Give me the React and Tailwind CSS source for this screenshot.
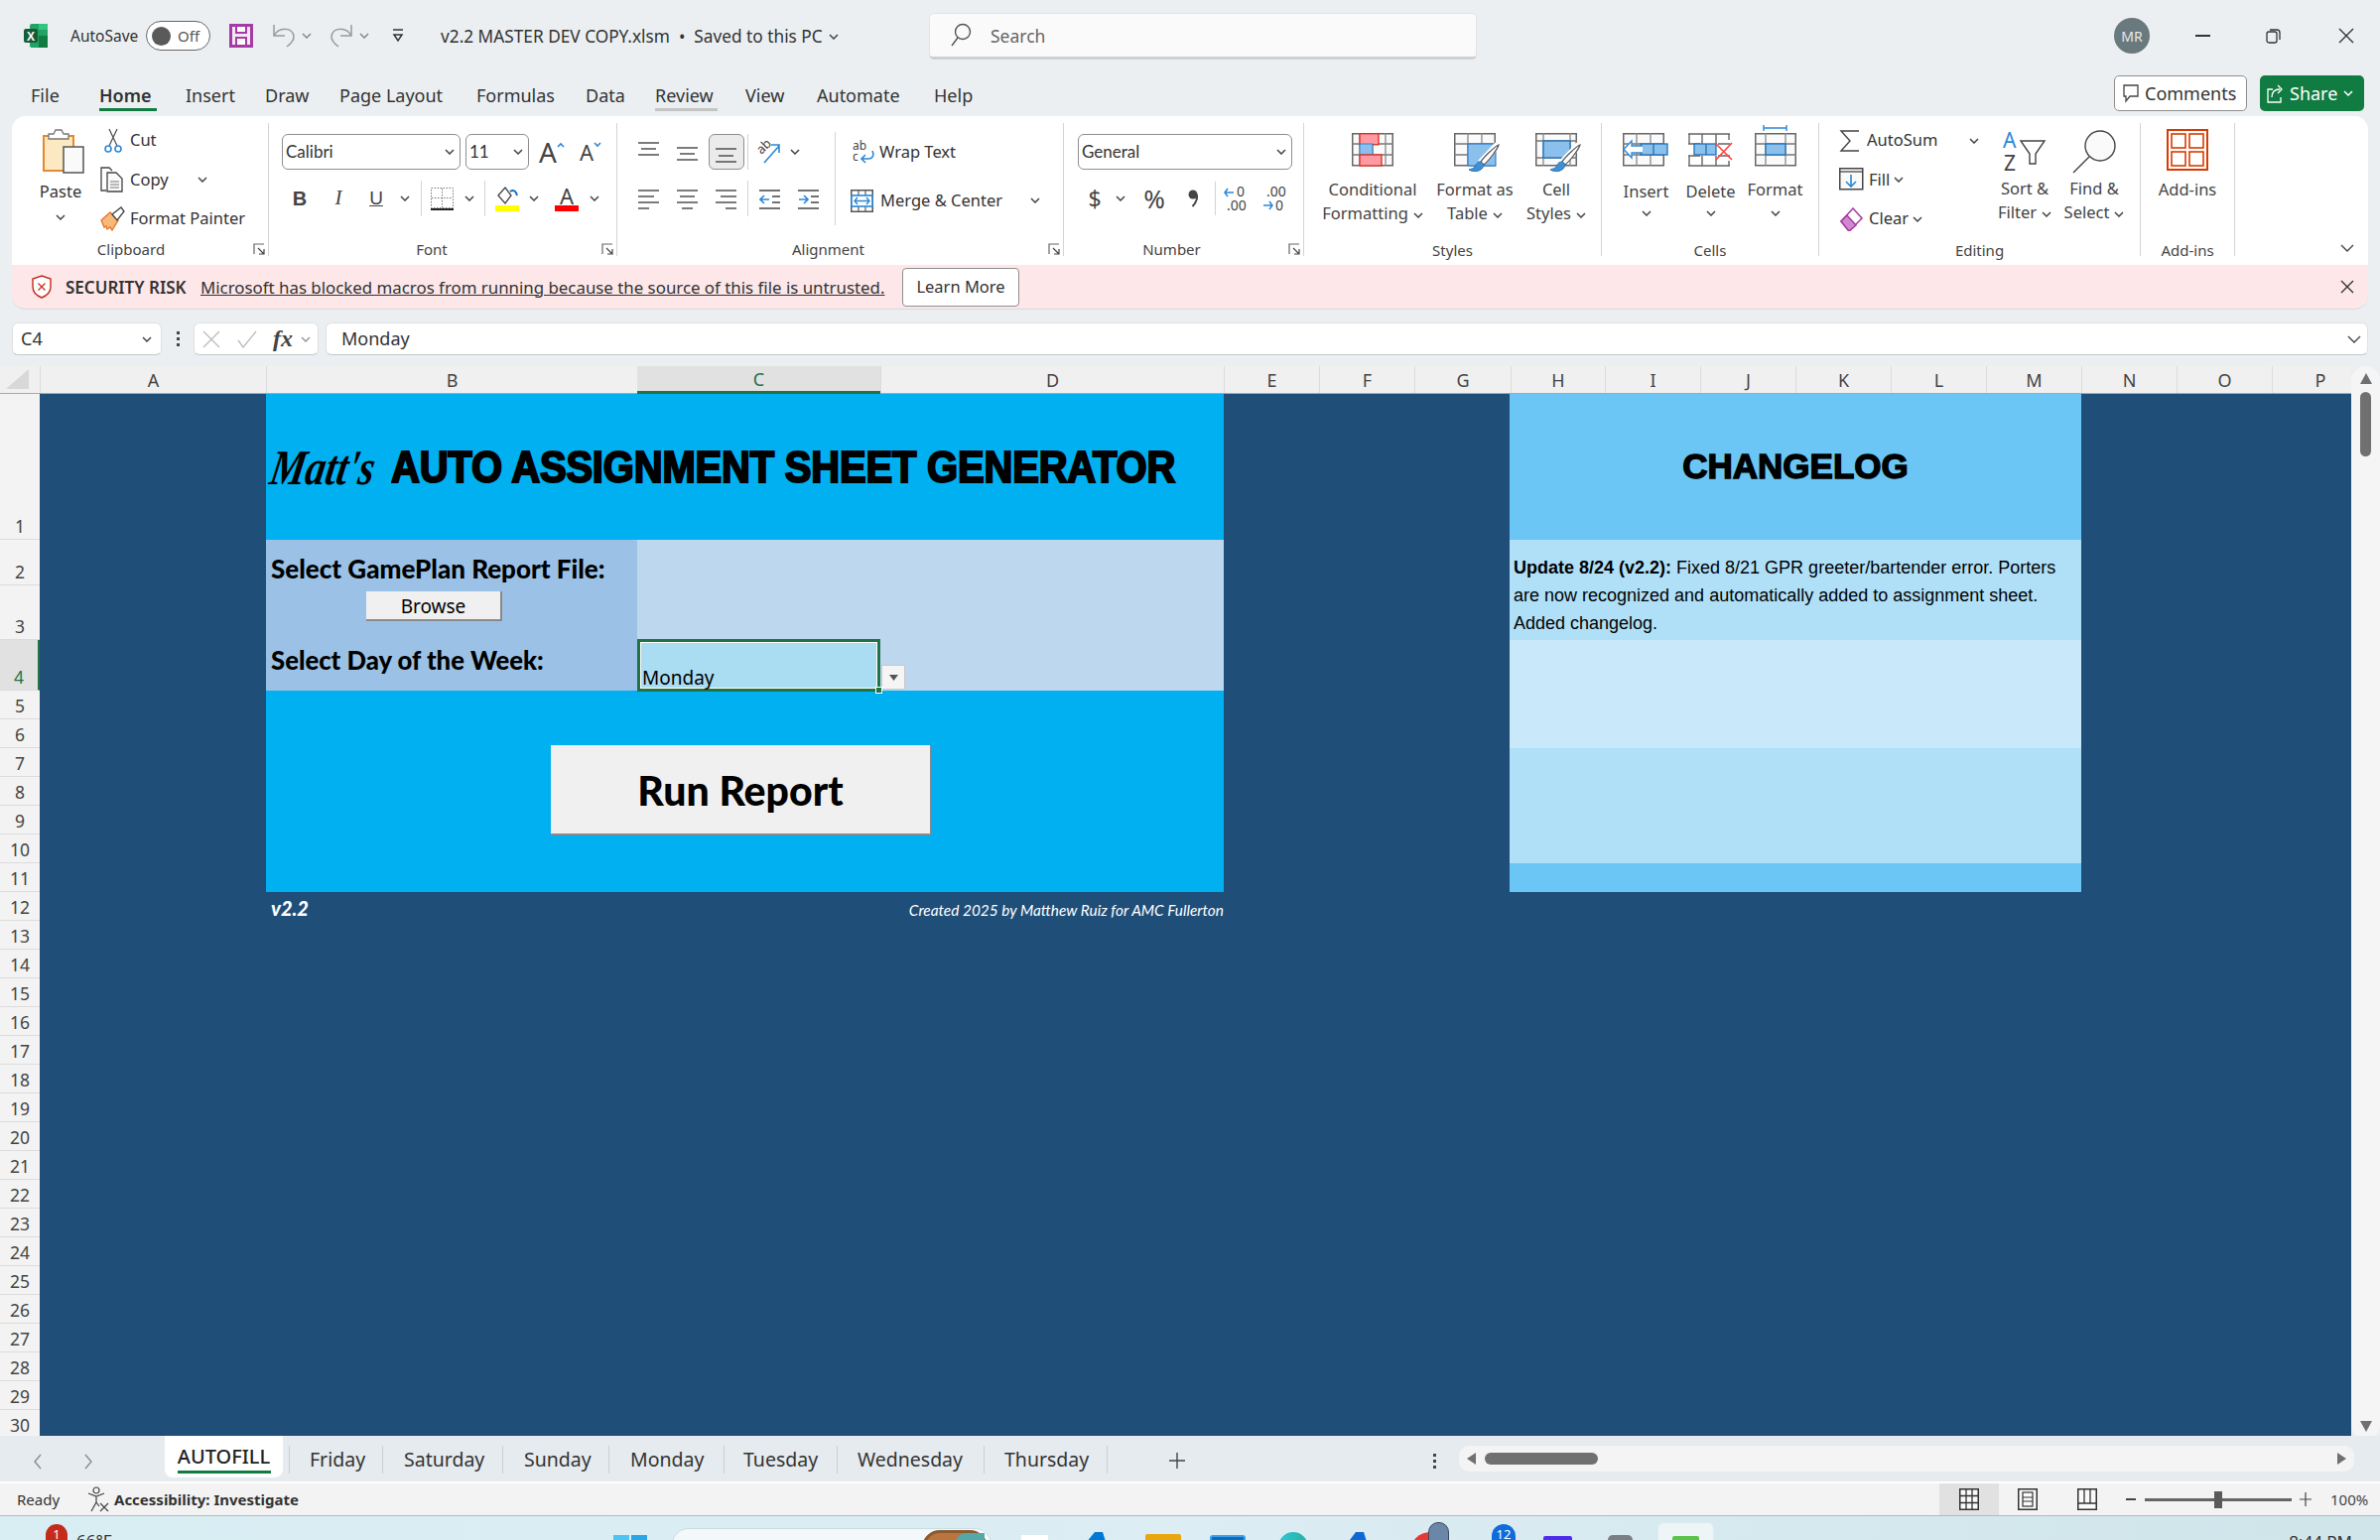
import React from "react";

const Chev = ({ className = "", c = "#444" }) => (
  <svg width="10" height="6" viewBox="0 0 10 6" className={"shrink-0 " + className}>
    <path d="M1 1l4 4 4-4" fill="none" stroke={c} strokeWidth="1.5" />
  </svg>
);

const Launcher = ({ className = "" }) => (
  <svg width="12" height="12" viewBox="0 0 12 12" className={"absolute top-[-1px] " + className}>
    <path d="M1 11V1h10" fill="none" stroke="#666" strokeWidth="1.2" />
    <path d="M5 5l5.5 5.5M6 11h5V6" fill="none" stroke="#444" strokeWidth="1.2" />
  </svg>
);

const Label = ({ className = "", children }) => (
  <div className={"relative mt-auto h-[12px] leading-[10px] text-center text-[15px] text-[#444] " + className}>{children}</div>
);

const Sep = ({ className = "" }) => <div className={"w-px h-[36px] bg-[#d4d4d4] shrink-0 " + className} />;

const Lines = ({ l, className = "", w = 22, h = 22 }) => (
  <svg width={w} height={h} viewBox={`0 0 ${w} ${h}`} className={"shrink-0 " + className}>
    {l.map((p, i) => (
      <line key={i} x1={p[0]} x2={p[1]} y1={p[2]} y2={p[2]} stroke="#444" strokeWidth="1.4" />
    ))}
  </svg>
);

const GridBase = ({ rows = [12, 22], cols = [8, 21, 34] }) => (
  <g>
    <rect x="0.75" y="0.75" width="40.5" height="32" fill="#fafafa" stroke="#666" strokeWidth="1.5" />
    {rows.map((y) => (
      <line key={y} x1="0" x2="42" y1={y} y2={y} stroke="#777" strokeWidth="1.3" />
    ))}
    {cols.map((x) => (
      <line key={x} y1="0" y2="33" x1={x} x2={x} stroke="#888" strokeWidth="1.3" />
    ))}
  </g>
);

const Brush = ({ dx = 0, dy = 0 }) => (
  <g transform={`translate(${dx} ${dy})`}>
    <path d="M44 12L27 30" stroke="#fff" strokeWidth="7" fill="none" />
    <path d="M45 12c-3 1-15 12-18 17l3 3c5-4 14-16 15-20z" fill="#fff" stroke="#555" strokeWidth="1.2" />
    <path d="M27 29c-4 0-5 3-6 5-1 2-4 2-6 3 5 3 14 2 15-5z" fill="#3f8fd2" stroke="#2a76b8" strokeWidth="1" />
  </g>
);

const TableChevText = ({ children }) => (
  <span className="inline-flex items-center gap-[5px]">
    {children}
    <Chev className="mt-[3px]" />
  </span>
);

const BigCol = ({ width, icon, l1, l2, chevOnly, iconH = "h-[45px]" }) => (
  <div className={"flex flex-col items-center shrink-0 " + width}>
    <div className={"flex items-start justify-center " + iconH}>{icon}</div>
    <div className="text-[16.5px] leading-[24px] text-[#444] whitespace-nowrap h-[24px]">{l1}</div>
    {chevOnly ? (
      <div className="h-[24px] flex items-center"><Chev /></div>
    ) : (
      <div className="text-[16.5px] leading-[24px] text-[#444] whitespace-nowrap h-[24px]">
        {l2 && <TableChevText>{l2}</TableChevText>}
      </div>
    )}
  </div>
);

const Group = ({ width, children, noBorder }) => (
  <div className={"flex flex-col shrink-0 h-[134px] mt-[7px] " + width + (noBorder ? "" : " border-r border-[#d4d4d4]")}>
    {children}
  </div>
);

const Select = ({ width, text, font }) => (
  <div className={"h-[36px] rounded-[6px] border border-[#8f8f8f] flex items-center justify-between pl-[3px] pr-[5px] bg-white shrink-0 " + width}>
    <span className={"font-['Lato',sans-serif] text-[#333] " + (font || "text-[17px]")}>{text}</span>
    <Chev />
  </div>
);

const Tab = ({ slot, w, active, review, children }) => (
  <div className={"shrink-0 " + slot}>
    <div
      className={
        "h-[36px] pt-[6px] leading-[28px] text-[18px] text-[#333] whitespace-nowrap border-b-[3px] " + w +
        (active ? " border-[#107c41] font-semibold" : review ? " border-[#c4c4c4]" : " border-transparent")
      }
    >
      {children}
    </div>
  </div>
);

const columns = [
  ["A", "w-[228px]"], ["B", "w-[374px]"], ["C", "w-[245px]"], ["D", "w-[346px]"],
  ["E", "w-[96px]"], ["F", "w-[96px]"], ["G", "w-[97px]"], ["H", "w-[95px]"], ["I", "w-[96px]"],
  ["J", "w-[96px]"], ["K", "w-[96px]"], ["L", "w-[96px]"], ["M", "w-[96px]"], ["N", "w-[96px]"],
  ["O", "w-[96px]"], ["P", "w-[80px] pl-[17px]"],
];

const rows = [
  ["1", "h-[147px]"], ["2", "h-[46px]"], ["3", "h-[55px]"], ["4", "h-[51px]"],
  ...Array.from({ length: 26 }, (_, i) => [String(i + 5), "h-[29px]"]),
];

const sheets = [
  ["Friday", "w-[94px]", "pl-[20px]"], ["Saturday", "w-[121px]", "pl-[21px]"], ["Sunday", "w-[107px]", "pl-[21px]"],
  ["Monday", "w-[116px]", "pl-[21px]"], ["Tuesday", "w-[114px]", "pl-[19px]"], ["Wednesday", "w-[148px]", "pl-[20px]"],
  ["Thursday", "w-[124px]", "pl-[20px]"],
];

export default function App() {
  return (
    <div className="w-[2398px] h-[1552px] overflow-hidden bg-[#ebeff2] flex flex-col font-['Noto_Sans',sans-serif] text-[#333]">
      {/* title bar */}
      <div className="h-[72px] shrink-0 flex items-center pl-[24px]">
        <svg width="24" height="24" viewBox="0 0 24 24" className="shrink-0">
          <rect x="6" y="0" width="18" height="24" rx="2" fill="#21a366" />
          <rect x="15" y="0" width="9" height="6" fill="#33c481" />
          <rect x="15" y="12" width="9" height="12" fill="#107c41" />
          <rect x="0" y="5" width="14" height="14" rx="2" fill="#185c37" />
          <text x="7" y="16.5" textAnchor="middle" fontSize="12" fontWeight="700" fill="#fff" fontFamily="Liberation Sans">X</text>
        </svg>
        <span className="ml-[23px] w-[66px] pt-[1px] text-[15.5px] text-[#333] whitespace-nowrap">AutoSave</span>
        <div className="ml-[10px] w-[65px] h-[30px] rounded-full border border-[#666] bg-white flex items-center pl-[5px] gap-[7px] shrink-0">
          <div className="w-[19px] h-[19px] rounded-full bg-[#5a5a5a]" />
          <span className="text-[15px] text-[#555]">Off</span>
        </div>
        <svg width="24" height="24" viewBox="0 0 24 24" className="ml-[19px] shrink-0">
          <rect x="1.5" y="1.5" width="21" height="21" fill="#f5e6f5" stroke="#a53ba5" strokeWidth="3" />
          <rect x="7" y="2" width="10" height="7" fill="#fff" stroke="#a53ba5" strokeWidth="2" />
          <rect x="7" y="14" width="10" height="8" fill="#fff" stroke="#a53ba5" strokeWidth="2" />
        </svg>
        <svg width="24" height="24" viewBox="0 0 24 24" className="ml-[19px] shrink-0">
          <path d="M2 1v11h11M2 12C7 3 21 3 22 13c0 4-3 7-7 10" fill="none" stroke="#999" strokeWidth="1.5" />
        </svg>
        <Chev className="ml-[6px]" c="#888" />
        <svg width="24" height="24" viewBox="0 0 24 24" className="ml-[18px] shrink-0">
          <path d="M22 1v11H11M22 12C17 3 3 3 2 13c0 4 3 7 7 10" fill="none" stroke="#999" strokeWidth="1.5" />
        </svg>
        <Chev className="ml-[6px]" c="#888" />
        <svg width="12" height="14" viewBox="0 0 12 14" className="ml-[23px] shrink-0">
          <path d="M1 1h10" stroke="#333" strokeWidth="1.5" />
          <path d="M2 6h8l-4 6z" fill="none" stroke="#333" strokeWidth="1.5" />
        </svg>
        <div className="ml-[37px] w-[492px] pt-[1px] flex items-center shrink-0 whitespace-nowrap text-[17.25px] text-[#333]">
          <span>v2.2 MASTER DEV COPY.xlsm&nbsp; •&nbsp; Saved to this PC</span>
          <Chev className="ml-[6px]" />
        </div>
        <div className="w-[552px] h-[47px] rounded-[5px] bg-[#fafafa] border border-[#e3e3e3] border-b-[3px] border-b-[#cfcfcf] flex items-center pl-[20px] shrink-0">
          <svg width="22" height="24" viewBox="0 0 22 24">
            <circle cx="13" cy="9" r="7.5" fill="none" stroke="#555" strokeWidth="1.4" />
            <path d="M8 15L2 23" stroke="#555" strokeWidth="1.4" />
          </svg>
          <span className="ml-[19px] pt-[2px] text-[17.5px] text-[#666]">Search</span>
        </div>
        <div className="ml-[642px] w-[36px] h-[36px] rounded-full bg-[#69797e] flex items-center justify-center text-[14px] text-[#e8e8e8] shrink-0">MR</div>
        <div className="ml-[46px] w-[15px] h-[2px] bg-[#333] shrink-0" />
        <svg width="16" height="16" viewBox="0 0 16 16" className="ml-[56px] shrink-0">
          <rect x="1" y="4" width="10" height="11" rx="2" fill="none" stroke="#333" strokeWidth="1.3" />
          <path d="M4 2h7a3 3 0 0 1 3 3v7" fill="none" stroke="#333" strokeWidth="1.3" />
        </svg>
        <svg width="16" height="16" viewBox="0 0 16 16" className="ml-[57px] shrink-0">
          <path d="M1 1l14 14M15 1L1 15" stroke="#333" strokeWidth="1.4" />
        </svg>
      </div>

      {/* ribbon tabs */}
      <div className="h-[45px] shrink-0 flex items-start pt-[4px] pl-[31px] pr-[16px]">
        <Tab slot="w-[69px]" w="w-[40px]">File</Tab>
        <Tab slot="w-[87px]" w="w-[58px]" active>Home</Tab>
        <Tab slot="w-[80px]" w="w-[60px]">Insert</Tab>
        <Tab slot="w-[75px]" w="w-[50px]">Draw</Tab>
        <Tab slot="w-[138px]" w="w-[110px]">Page Layout</Tab>
        <Tab slot="w-[110px]" w="w-[90px]">Formulas</Tab>
        <Tab slot="w-[70px]" w="w-[50px]">Data</Tab>
        <Tab slot="w-[91px]" w="w-[63px]" review>Review</Tab>
        <Tab slot="w-[72px]" w="w-[50px]">View</Tab>
        <Tab slot="w-[118px]" w="w-[95px]">Automate</Tab>
        <Tab slot="w-[60px]" w="w-[50px]">Help</Tab>
        <div className="ml-auto flex gap-[13px]">
          <div className="w-[134px] h-[36px] rounded-[5px] border border-[#8f8f8f] bg-white flex items-center pl-[8px] gap-[6px]">
            <svg width="16" height="20" viewBox="0 0 16 20">
              <path d="M1 2h14v11H7l-4 5v-5H1z" fill="none" stroke="#444" strokeWidth="1.3" />
            </svg>
            <span className="text-[18px] whitespace-nowrap">Comments</span>
          </div>
          <div className="w-[105px] h-[36px] rounded-[5px] bg-[#107c41] text-white flex items-center pl-[7px] gap-[6px]">
            <svg width="17" height="20" viewBox="0 0 17 20">
              <path d="M6 6H1v13h13v-5" fill="none" stroke="#fff" strokeWidth="1.3" />
              <path d="M5 14c0-5 3-8 8-8M11 2l4 4-4 4" fill="none" stroke="#fff" strokeWidth="1.3" />
            </svg>
            <span className="text-[18px]">Share</span>
            <Chev c="#fff" />
          </div>
        </div>
      </div>

      {/* ribbon */}
      <div className="mx-[12px] h-[150px] shrink-0 bg-white rounded-t-[14px] flex items-start">
        {/* Clipboard */}
        <Group width="w-[259px]">
          <div className="flex pl-[24px]">
            <div className="w-[50px] flex flex-col items-center shrink-0">
              <svg width="42" height="46" viewBox="0 0 42 46" className="ml-[6px] mt-[6px] shrink-0">
                <rect x="1" y="7" width="30" height="35" fill="#fde9c1" stroke="#e8872d" strokeWidth="2" />
                <path d="M6 5h5l2-4h6l2 4h5v5H6z" fill="#fff" stroke="#777" strokeWidth="1.3" />
                <rect x="21" y="18" width="20" height="26" fill="#fafafa" stroke="#555" strokeWidth="1.5" />
              </svg>
              <span className="text-[16.5px] leading-[22px] mt-[6px]">Paste</span>
              <Chev className="mt-[12px]" />
            </div>
            <div className="ml-[15px] pt-[5px] flex flex-col gap-[14.5px]">
              <div className="h-[25px] flex items-center">
                <svg width="30" height="26" viewBox="0 0 30 26" className="shrink-0">
                  <path d="M9 1l8 17M17 1L9 18" stroke="#555" strokeWidth="1.3" fill="none" />
                  <circle cx="8" cy="21" r="3" fill="none" stroke="#2b88d8" strokeWidth="1.6" />
                  <circle cx="18" cy="21" r="3" fill="none" stroke="#2b88d8" strokeWidth="1.6" />
                </svg>
                <span className="text-[16.5px]">Cut</span>
              </div>
              <div className="h-[25px] flex items-center">
                <svg width="30" height="26" viewBox="0 0 30 26" className="shrink-0">
                  <path d="M6 24H1V1h8l3 3" fill="none" stroke="#444" strokeWidth="1.3" />
                  <path d="M7 6h9l6 6v13H7z" fill="#fafafa" stroke="#444" strokeWidth="1.3" />
                  <path d="M10 15h9M10 18h9M10 21h9" stroke="#777" strokeWidth="1" />
                </svg>
                <span className="text-[16.5px]">Copy</span>
                <Chev className="ml-[29px]" />
              </div>
              <div className="h-[25px] flex items-center">
                <svg width="30" height="26" viewBox="0 0 30 26" className="shrink-0">
                  <path d="M1 14l9-8 8 8-6 10-2-3-3 2-1-3-2 1z" fill="#f7b978" stroke="#e8772d" strokeWidth="1.4" />
                  <path d="M12 8l9-7 3 4-7 9z" fill="#fff" stroke="#444" strokeWidth="1.3" />
                </svg>
                <span className="text-[16.5px] whitespace-nowrap">Format Painter</span>
              </div>
            </div>
          </div>
          <Label className="pr-[18px]">Clipboard<Launcher className="right-[3px]" /></Label>
        </Group>

        {/* Font */}
        <Group width="w-[351px]">
          <div className="flex items-center pt-[11px] pl-[13px]">
            <Select width="w-[180px]" text="Calibri" />
            <Select width="w-[64px] ml-[5px]" text="11" />
            <span className="ml-[10px] text-[28px] leading-[36px] text-[#444]">A</span>
            <svg width="8" height="6" viewBox="0 0 8 6" className="mb-[14px]"><path d="M1 5l3-3 3 3" fill="none" stroke="#2b88d8" strokeWidth="1.6" /></svg>
            <span className="ml-[15px] text-[22px] leading-[36px] text-[#444]">A</span>
            <svg width="8" height="6" viewBox="0 0 8 6" className="mb-[14px]"><path d="M1 1l3 3 3-3" fill="none" stroke="#2b88d8" strokeWidth="1.6" /></svg>
          </div>
          <div className="flex items-center mt-[11px] h-[36px] pl-[17px]">
            <span className="w-[28px] text-center font-['Liberation_Sans'] font-bold text-[20px] text-[#444]">B</span>
            <span className="ml-[11px] w-[28px] text-center font-['Liberation_Serif'] italic text-[21px] text-[#444]">I</span>
            <span className="ml-[10px] w-[28px] text-center font-['Liberation_Sans'] underline text-[19px] text-[#444]">U</span>
            <Chev className="ml-[10px]" />
            <Sep className="ml-[11px]" />
            <svg width="23" height="23" viewBox="0 0 23 23" className="ml-[9px] shrink-0">
              <rect x="0.5" y="0.5" width="22" height="20" fill="none" stroke="#777" strokeWidth="1" strokeDasharray="1.5 1.5" />
              <path d="M11.5 1v19M1 10.5h21" stroke="#777" strokeWidth="1" strokeDasharray="1.5 1.5" />
              <path d="M0 22h23" stroke="#222" strokeWidth="2" />
            </svg>
            <Chev className="ml-[11px]" />
            <Sep className="ml-[10px]" />
            <div className="ml-[10px] w-[24px] flex flex-col items-center shrink-0">
              <svg width="24" height="20" viewBox="0 0 24 20">
                <path d="M3 10l7-8 6 8-6 8z" fill="#fff" stroke="#444" strokeWidth="1.3" />
                <path d="M15 6c3-2 6-1 7 4" fill="none" stroke="#1a6fb8" strokeWidth="2" />
              </svg>
              <div className="w-[24px] h-[6px] bg-[#ffff00]" />
            </div>
            <Chev className="ml-[10px]" />
            <div className="ml-[16px] w-[24px] flex flex-col items-center shrink-0">
              <span className="text-[22px] leading-[20px] h-[20px] text-[#444]">A</span>
              <div className="w-[24px] h-[6px] bg-[#ff0000]" />
            </div>
            <Chev className="ml-[11px]" />
          </div>
          <Label className="pr-[22px]">Font<Launcher className="right-[3px]" /></Label>
        </Group>

        {/* Alignment */}
        <Group width="w-[450px]">
          <div className="flex">
            <div className="w-[219px] shrink-0 pt-[11px] flex flex-col gap-[11px]">
              <div className="flex items-center h-[36px] pl-[21px]">
                <Lines l={[[0, 21, 2], [3, 18, 8], [0, 21, 14]]} />
                <Lines className="ml-[17px]" l={[[0, 21, 7], [3, 18, 13], [0, 21, 19]]} />
                <div className="ml-[10px] w-[36px] h-[36px] rounded-[6px] bg-[#ebebeb] border border-[#8f8f8f] flex items-end justify-center pb-[3px] shrink-0">
                  <Lines l={[[0, 21, 5], [3, 18, 12], [0, 21, 18]]} />
                </div>
                <Sep className="ml-[3px]" />
                <svg width="24" height="26" viewBox="0 0 24 26" className="ml-[9px] shrink-0">
                  <text x="0" y="12" fontSize="13" fill="#444" transform="rotate(-45 7 9)" fontFamily="Noto Sans">ab</text>
                  <path d="M7 24L22 7M14 6h8v8" fill="none" stroke="#2b88d8" strokeWidth="1.6" />
                </svg>
                <Chev className="ml-[9px]" />
              </div>
              <div className="flex items-center h-[36px] pl-[21px]">
                <Lines l={[[0, 21, 3], [0, 16, 9], [0, 21, 15], [0, 11, 21]]} />
                <Lines className="ml-[17px]" l={[[0, 21, 3], [3, 18, 9], [0, 21, 15], [5, 16, 21]]} />
                <Lines className="ml-[17px]" l={[[0, 21, 3], [5, 21, 9], [0, 21, 15], [10, 21, 21]]} />
                <Sep className="ml-[10px]" />
                <svg width="22" height="22" viewBox="0 0 22 22" className="ml-[11px] shrink-0">
                  <path d="M0 3h21M13 9h8M13 15h8M0 21h21" stroke="#444" strokeWidth="1.4" />
                  <path d="M10 12H1M5 8l-4 4 4 4" fill="none" stroke="#2b88d8" strokeWidth="1.6" />
                </svg>
                <svg width="22" height="22" viewBox="0 0 22 22" className="ml-[17px] shrink-0">
                  <path d="M0 3h21M13 9h8M13 15h8M0 21h21" stroke="#444" strokeWidth="1.4" />
                  <path d="M1 12h9M6 8l4 4-4 4" fill="none" stroke="#2b88d8" strokeWidth="1.6" />
                </svg>
              </div>
            </div>
            <div className="h-[94px] mt-[9px] border-l border-[#d4d4d4] flex-1 flex flex-col">
              <div className="flex items-center h-[24px] pl-[17px] mt-[8px]">
                <svg width="22" height="24" viewBox="0 0 22 24" className="shrink-0">
                  <text x="0" y="10" fontSize="12" fill="#444" fontFamily="Noto Sans">ab</text>
                  <text x="0" y="21" fontSize="12" fill="#444" fontFamily="Noto Sans">c</text>
                  <path d="M20 11c2 5 0 8-4 8H10M13 15l-4 4 4 4" fill="none" stroke="#2b88d8" strokeWidth="1.6" />
                </svg>
                <span className="ml-[5px] text-[16.5px] whitespace-nowrap">Wrap Text</span>
              </div>
              <div className="flex items-center h-[24px] pl-[15px] mt-[25px]">
                <svg width="23" height="23" viewBox="0 0 23 23" className="shrink-0">
                  <rect x="0.75" y="0.75" width="21.5" height="21.5" fill="none" stroke="#555" strokeWidth="1.5" />
                  <path d="M8 1v5M15 1v5M8 17v5M15 17v5" stroke="#666" strokeWidth="1.3" />
                  <rect x="1" y="6" width="21" height="11" fill="#fff" stroke="#2b88d8" strokeWidth="1.6" />
                  <path d="M4 11.5h15M7 8l-3 3.5 3 3.5M16 8l3 3.5-3 3.5" fill="none" stroke="#2b88d8" strokeWidth="1.4" />
                </svg>
                <span className="ml-[7px] w-[151px] text-[16.5px] whitespace-nowrap">Merge &amp; Center</span>
                <Chev />
              </div>
            </div>
          </div>
          <Label className="pr-[24px]">Alignment<Launcher className="right-[3px]" /></Label>
        </Group>

        {/* Number */}
        <Group width="w-[242px]">
          <div className="pt-[11px] pl-[14px]"><Select width="w-[216px]" text="General" /></div>
          <div className="flex items-center mt-[11px] h-[36px] pl-[24px]">
            <span className="w-[14px] text-center text-[23px] text-[#444]">$</span>
            <Chev className="ml-[14px]" />
            <span className="ml-[15px] w-[28px] text-center text-[26px] text-[#444]">%</span>
            <svg width="10" height="18" viewBox="0 0 10 18" className="ml-[20px] shrink-0">
              <circle cx="5" cy="5" r="4.5" fill="#444" />
              <path d="M9.5 5c0 5-2 9-5 12" fill="none" stroke="#444" strokeWidth="2" />
            </svg>
            <div className="ml-[17px] w-px h-[34px] bg-[#d4d4d4] shrink-0" />
            <svg width="24" height="28" viewBox="0 0 24 28" className="ml-[8px] shrink-0">
              <path d="M10 8H1M4 4L1 8l3 4" fill="none" stroke="#2b88d8" strokeWidth="1.5" />
              <text x="13" y="12" fontSize="14" fill="#444" fontFamily="Noto Sans">0</text>
              <text x="3" y="26" fontSize="14" fill="#444" fontFamily="Noto Sans">.00</text>
            </svg>
            <svg width="24" height="28" viewBox="0 0 24 28" className="ml-[15px] shrink-0">
              <text x="4" y="12" fontSize="14" fill="#444" fontFamily="Noto Sans">.00</text>
              <path d="M1 21h9M7 17l3 4-3 4" fill="none" stroke="#2b88d8" strokeWidth="1.5" />
              <text x="13" y="26" fontSize="14" fill="#444" fontFamily="Noto Sans">0</text>
            </svg>
          </div>
          <Label className="pr-[24px]">Number<Launcher className="right-[3px]" /></Label>
        </Group>

        {/* Styles */}
        <Group width="w-[300px]">
          <div className="flex pl-[8px] pt-[10px]">
            <BigCol width="w-[122px]" l1="Conditional" l2="Formatting" icon={
              <svg width="42" height="34" viewBox="0 0 42 34">
                <GridBase rows={[11, 22]} cols={[8, 21, 34]} />
                <rect x="8" y="0.75" width="19" height="11" fill="#ff9aa2" stroke="#dc2b20" strokeWidth="1.3" />
                <rect x="8" y="11" width="13" height="11" fill="#8cc0ec" stroke="#1e70b8" strokeWidth="0.8" />
                <rect x="8" y="22" width="22" height="11" fill="#ff9aa2" stroke="#dc2b20" strokeWidth="1.3" />
              </svg>
            } />
            <BigCol width="w-[84px]" l1="Format as" l2="Table" icon={
              <svg width="48" height="42" viewBox="0 0 48 42" className="ml-[5px]">
                <GridBase rows={[11, 22]} cols={[14, 28]} />
                <rect x="14" y="11" width="28" height="22" fill="#8cc0ec" stroke="#1e70b8" strokeWidth="1" />
                <Brush />
              </svg>
            } />
            <BigCol width="w-[80px]" l1="Cell" l2="Styles" icon={
              <svg width="48" height="42" viewBox="0 0 48 42" className="ml-[5px]">
                <GridBase rows={[8, 25]} cols={[8, 35]} />
                <rect x="8" y="8" width="27" height="17" fill="#8cc0ec" stroke="#1e70b8" strokeWidth="1.3" />
                <Brush />
              </svg>
            } />
          </div>
          <Label className="!leading-[12px]">Styles</Label>
        </Group>

        {/* Cells */}
        <Group width="w-[219px]">
          <div className="flex pl-[12px] pt-[10px]">
            <BigCol width="w-[65px]" l1={<span className="block pt-[2px]">Insert</span>} chevOnly icon={
              <svg width="48" height="34" viewBox="0 0 48 34">
                <GridBase rows={[11, 22]} cols={[14, 28]} />
                <rect x="18" y="11" width="27" height="11" fill="#8cc0ec" stroke="#1e70b8" strokeWidth="1.3" />
                <path d="M31 11v11" stroke="#1e70b8" strokeWidth="1.3" />
                <path d="M20 13H9v-5L1 16.5 9 25v-5h11" fill="#fff" stroke="#2b88d8" strokeWidth="1.3" />
              </svg>
            } />
            <BigCol width="w-[65px]" l1={<span className="block pt-[2px]">Delete</span>} chevOnly icon={
              <svg width="46" height="34" viewBox="0 0 46 34">
                <path d="M0 1h42M0 33h42M0 11h12M30 11h12M0 23h12M30 23h12M14 1v10M28 1v10M14 23v10M28 23v10M1 1v10M41 1v6M1 23v10M41 28v5" stroke="#666" strokeWidth="1.4" />
                <rect x="6" y="11" width="22" height="11" fill="#8cc0ec" stroke="#1e70b8" strokeWidth="1.3" />
                <path d="M18 11v11" stroke="#1e70b8" strokeWidth="1.3" />
                <path d="M28 11l16 16M44 10L28 27" stroke="#ff4545" strokeWidth="1.7" />
              </svg>
            } />
            <BigCol width="w-[65px]" l1="Format" chevOnly icon={
              <svg width="42" height="34" viewBox="0 0 42 34" className="overflow-visible">
                <path d="M9 -5h23M9 -8v6M32 -8v6" stroke="#2b88d8" strokeWidth="1.4" fill="none" />
                <GridBase rows={[11, 22]} cols={[11, 31]} />
                <rect x="11" y="11" width="20" height="11" fill="#8cc0ec" stroke="#1e70b8" strokeWidth="1.3" />
              </svg>
            } />
          </div>
          <Label className="!leading-[12px]">Cells</Label>
        </Group>

        {/* Editing */}
        <Group width="w-[324px]">
          <div className="flex">
            <div className="ml-[20px] w-[151px] pt-[5px] flex flex-col gap-[14.5px] shrink-0">
              <div className="h-[25px] flex items-center">
                <svg width="28" height="24" viewBox="0 0 28 24" className="shrink-0">
                  <path d="M20 2H2l9 10L2 22h18" fill="none" stroke="#444" strokeWidth="1.4" />
                </svg>
                <span className="w-[103px] text-[16.5px]">AutoSum</span>
                <Chev />
              </div>
              <div className="h-[25px] flex items-center">
                <svg width="30" height="24" viewBox="0 0 30 24" className="shrink-0">
                  <rect x="0.75" y="0.75" width="23" height="21" fill="#fafafa" stroke="#444" strokeWidth="1.5" />
                  <path d="M1 4h23" stroke="#444" strokeWidth="1.3" />
                  <path d="M12 7v12M7 14l5 5 5-5" fill="none" stroke="#2b88d8" strokeWidth="1.6" />
                </svg>
                <span className="text-[16.5px]">Fill</span>
                <Chev className="ml-[4px]" />
              </div>
              <div className="h-[25px] flex items-center">
                <svg width="30" height="24" viewBox="0 0 30 24" className="shrink-0">
                  <path d="M2 14L14 1l9 10-13 13z" fill="#fff" stroke="#a53ba5" strokeWidth="1.5" />
                  <path d="M2 14l6-6 9 10-7 6z" fill="#cf8acf" stroke="#a53ba5" strokeWidth="1.5" />
                </svg>
                <span className="text-[16.5px]">Clear</span>
                <Chev className="ml-[4px]" />
              </div>
            </div>
            <div className="pt-[7px] flex">
              <BigCol width="w-[72px]" iconH="h-[47px]" l1="Sort &" l2="Filter" icon={
                <svg width="44" height="42" viewBox="0 0 44 42" className="overflow-visible">
                  <text x="0" y="18" fontSize="21" fill="#2b88d8" fontFamily="Noto Sans">A</text>
                  <text x="1" y="41" fontSize="21" fill="#444" fontFamily="Noto Sans">Z</text>
                  <path d="M18 11h24l-9 13v10h-6V24z" fill="#fff" stroke="#444" strokeWidth="1.4" />
                </svg>
              } />
              <BigCol width="w-[68px]" iconH="h-[47px]" l1="Find &" l2="Select" icon={
                <svg width="44" height="44" viewBox="0 0 44 44">
                  <circle cx="28" cy="16" r="15" fill="#fafafa" stroke="#444" strokeWidth="1.4" />
                  <path d="M17 27L1 43" stroke="#444" strokeWidth="1.4" />
                </svg>
              } />
            </div>
          </div>
          <Label className="!leading-[12px]">Editing</Label>
        </Group>

        {/* Add-ins */}
        <Group width="w-[95px]">
          <div className="flex justify-center pt-[6px]">
            <BigCol width="w-[95px]" iconH="h-[49px]" l1="Add-ins" icon={
              <svg width="42" height="42" viewBox="0 0 42 42">
                <rect x="1" y="1" width="40" height="40" fill="#fff" stroke="#d83b01" strokeWidth="2" />
                <rect x="5" y="5" width="14" height="14" fill="#fff" stroke="#d83b01" strokeWidth="1.6" />
                <rect x="23" y="5" width="14" height="14" fill="#fff" stroke="#d83b01" strokeWidth="1.6" />
                <rect x="5" y="23" width="14" height="14" fill="#fff" stroke="#d83b01" strokeWidth="1.6" />
                <rect x="23" y="23" width="14" height="14" fill="#fff" stroke="#d83b01" strokeWidth="1.6" />
              </svg>
            } />
          </div>
          <Label className="!leading-[12px]">Add-ins</Label>
        </Group>

        <div className="flex-1 h-[134px] mt-[7px] flex items-end justify-end pr-[14px] pb-[4px]">
          <svg width="14" height="8" viewBox="0 0 14 8"><path d="M1 1l6 6 6-6" fill="none" stroke="#444" strokeWidth="1.4" /></svg>
        </div>
      </div>

      {/* security bar */}
      <div className="mx-[12px] h-[45px] shrink-0 bg-[#fde7e9] rounded-b-[14px] border-b border-[#d9d9d9] flex items-center pl-[20px] pr-[13px]">
        <svg width="20" height="24" viewBox="0 0 20 24" className="shrink-0">
          <path d="M10 1l9 3v8c0 5-4 9-9 11-5-2-9-6-9-11V4z" fill="#fff" stroke="#c42b1c" strokeWidth="1.4" />
          <path d="M6.5 8.5l7 7M13.5 8.5l-7 7" stroke="#c42b1c" strokeWidth="1.2" />
        </svg>
        <span className="ml-[14px] pt-[1px] w-[136px] text-[17px] font-semibold whitespace-nowrap">SECURITY RISK</span>
        <span className="underline pt-[1px] text-[16.85px] w-[707px] whitespace-nowrap">Microsoft has blocked macros from running because the source of this file is untrusted.</span>
        <div className="w-[118px] h-[39px] bg-white rounded-[4px] border border-[#8f8f8f] flex items-center justify-center text-[16.5px]">Learn More</div>
        <svg width="16" height="16" viewBox="0 0 16 16" className="ml-auto shrink-0">
          <path d="M2 2l12 12M14 2L2 14" stroke="#333" strokeWidth="1.4" />
        </svg>
      </div>

      {/* formula bar */}
      <div className="mt-[13px] h-[33px] shrink-0 mx-[12px] flex items-stretch">
        <div className="w-[151px] bg-white rounded-[6px] border border-[#e0e0e0] border-b-[#c8c8c8] flex items-center justify-between pl-[8px] pr-[9px] text-[18px]">
          C4<Chev />
        </div>
        <div className="w-[32px] flex flex-col items-center justify-center gap-[3px]">
          <div className="w-[3px] h-[3px] bg-[#444]" /><div className="w-[3px] h-[3px] bg-[#444]" /><div className="w-[3px] h-[3px] bg-[#444]" />
        </div>
        <div className="w-[126px] bg-white rounded-[6px] border border-[#e0e0e0] border-b-[#c8c8c8] flex items-center pl-[8px]">
          <svg width="18" height="18" viewBox="0 0 18 18" className="shrink-0"><path d="M1 1l16 16M17 1L1 17" stroke="#bbb" strokeWidth="1.3" /></svg>
          <svg width="20" height="18" viewBox="0 0 20 18" className="ml-[17px] shrink-0"><path d="M1 10l5 7L19 1" fill="none" stroke="#bbb" strokeWidth="1.3" /></svg>
          <span className="ml-[16px] -mt-[2px] font-['Liberation_Serif'] italic font-bold text-[24px] text-[#444]">fx</span>
          <Chev className="ml-[8px]" c="#999" />
        </div>
        <div className="ml-[7px] flex-1 bg-white rounded-[6px] border border-[#e0e0e0] border-b-[#c8c8c8] flex items-center justify-between pl-[15px] pr-[6px] text-[18px]">
          Monday
          <svg width="14" height="8" viewBox="0 0 14 8"><path d="M1 1l6 6 6-6" fill="none" stroke="#444" strokeWidth="1.4" /></svg>
        </div>
      </div>

      {/* sheet area */}
      <div className="mt-[11px] h-[1078px] shrink-0 flex">
        <div className="w-[2369px] shrink-0 flex flex-col">
          <div className="h-[28px] shrink-0 flex bg-[#f0f0f0] border-b border-[#a8a8a8]">
            <div className="w-[40px] shrink-0 flex items-center justify-center">
              <svg width="24" height="21" viewBox="0 0 24 21" className="ml-[-4px]"><path d="M23 0v20H0z" fill="#d8d8d8" /></svg>
            </div>
            {columns.map(([c, w]) =>
              c === "C" ? (
                <div key={c} className={"shrink-0 h-[28px] pt-[2px] flex items-center justify-center bg-[#e1e1e1] border-b-[3px] border-[#217346] text-[18px] text-[#217346] " + w}>{c}</div>
              ) : (
                <div key={c} className={"shrink-0 pt-[2px] flex items-center justify-center border-l border-[#dcdcdc] text-[18px] text-[#444] " + w}>{c}</div>
              )
            )}
          </div>
          <div className="h-[1050px] shrink-0 flex overflow-hidden">
            <div className="w-[40px] shrink-0 bg-[#f3f3f3] flex flex-col">
              {rows.map(([n, h]) => (
                <div
                  key={n}
                  className={
                    "shrink-0 flex items-end justify-center leading-[26px] text-[17.5px] border-b border-[#dcdcdc] " + h +
                    (n === "4" ? " bg-[#e1e1e1] text-[#217346] border-r-[2px] border-r-[#217346]" : " text-[#444]")
                  }
                >
                  {n}
                </div>
              ))}
            </div>
            <div className="flex-1 bg-[#1f4e78] flex pl-[228px] items-start text-black">
              {/* main panel */}
              <div className="w-[965px] shrink-0 flex flex-col font-['Liberation_Sans',sans-serif]">
                <div className="h-[147px] bg-[#00b0f0] flex items-center pl-[5px] whitespace-nowrap">
                  <span className="inline-block w-[121px] font-['Liberation_Serif',serif] italic font-bold text-[40px] scale-y-125 -skew-x-12 mt-[3px]">Matt's</span>
                  <span className="font-bold text-[40px] scale-y-110 origin-left [-webkit-text-stroke:1.9px_black] tracking-[-0.2px]">AUTO ASSIGNMENT SHEET GENERATOR</span>
                </div>
                <div className="h-[152px] flex font-['Lato',sans-serif]">
                  <div className="w-[374px] bg-[#9bc2e6] pl-[5px] flex flex-col shrink-0">
                    <div className="mt-[11px] h-[36px] leading-[36px] font-black text-[26px] whitespace-nowrap">Select GamePlan Report File:</div>
                    <div className="ml-[96px] mt-[5px] w-[137px] h-[30px] pt-[3px] bg-[#f0f0f0] border-r-2 border-b-2 border-[#8a8a8a] flex items-center justify-center text-[19px] font-['Noto_Sans']">Browse</div>
                    <div className="mt-[21px] h-[36px] leading-[36px] font-black text-[25.7px] whitespace-nowrap">Select Day of the Week:</div>
                  </div>
                  <div className="flex-1 bg-[#bdd7ee] flex items-end">
                    <div className="relative w-[245px] h-[53px] -mb-[1px] bg-[#aadcf2] border-[3px] border-[#217346] shadow-[inset_0_0_0_1px_white] flex items-end pl-[2px] font-['Noto_Sans'] text-[19px] leading-[21px] shrink-0">
                      Monday
                      <div className="absolute right-[-5px] bottom-[-5px] w-[7px] h-[7px] bg-[#217346] border border-white" />
                    </div>
                    <div className="ml-[1px] mb-[1px] w-[24px] h-[25px] bg-[#f5f5f5] border border-[#c8c8c8] flex items-center justify-center">
                      <svg width="9" height="6" viewBox="0 0 9 6"><path d="M0 0h9L4.5 6z" fill="#555" /></svg>
                    </div>
                  </div>
                </div>
                <div className="h-[203px] bg-[#00b0f0] pt-[55px] pl-[287px]">
                  <div className="w-[383px] h-[91px] pt-[2px] bg-[#f0f0f0] border-b-2 border-r border-[#8a8a8a] flex items-center justify-center font-['Lato'] font-black text-[41px]">Run Report</div>
                </div>
                <div className="h-[34px] flex items-center justify-between pl-[5px] text-white">
                  <span className="font-['Lato'] font-black italic text-[20px] -mt-[3px]">v2.2</span>
                  <span className="font-['Lato'] italic text-[15.4px] mt-[4px]">Created 2025 by Matthew Ruiz for AMC Fullerton</span>
                </div>
              </div>
              {/* changelog */}
              <div className="ml-[288px] w-[576px] shrink-0 flex flex-col font-['Liberation_Sans',sans-serif]">
                <div className="h-[147px] bg-[#6bc6f5] flex items-center justify-center font-bold text-[35px] [-webkit-text-stroke:1.4px_black]">CHANGELOG</div>
                <div className="h-[101px] bg-[#b0e0f8] pl-[4px] pt-[14px] text-[18px] leading-[28px] whitespace-nowrap">
                  <b>Update 8/24 (v2.2):</b> Fixed 8/21 GPR greeter/bartender error. Porters<br />
                  are now recognized and automatically added to assignment sheet.<br />
                  Added changelog.
                </div>
                <div className="h-[109px] bg-[#c9e8fa]" />
                <div className="h-[116px] bg-[#b0e0f8]" />
                <div className="h-[29px] bg-[#6bc6f5]" />
              </div>
            </div>
          </div>
        </div>
        <div className="w-[29px] h-[1081px] bg-[#f5f5f5] rounded-full flex flex-col items-center pt-[7px] text-[#707070]">
          <svg width="12" height="11" viewBox="0 0 12 11"><path d="M6 0l6 11H0z" fill="#707070" /></svg>
          <div className="mt-[8px] w-[11px] h-[65px] rounded-full bg-[#707070]" />
          <svg width="12" height="11" viewBox="0 0 12 11" className="mt-auto mb-[7px]"><path d="M6 11L0 0h12z" fill="#707070" /></svg>
        </div>
      </div>

      {/* sheet tabs */}
      <div className="h-[48px] shrink-0 bg-[#e6ebef] border-b-2 border-white flex items-start">
        <svg width="12" height="16" viewBox="0 0 12 16" className="ml-[32px] mt-[18px] shrink-0"><path d="M9 1L3 8l6 7" fill="none" stroke="#888" strokeWidth="1.3" /></svg>
        <svg width="12" height="16" viewBox="0 0 12 16" className="ml-[39px] mt-[18px] shrink-0"><path d="M3 1l6 7-6 7" fill="none" stroke="#888" strokeWidth="1.3" /></svg>
        <div className="ml-[71px] w-[119px] h-[42px] bg-white rounded-b-[8px] shrink-0 flex justify-center">
          <div className="w-[94px] h-[38px] border-b-[3px] border-[#107c41] leading-[42px] text-[20px] font-medium text-center text-[#222] whitespace-nowrap">AUTOFILL</div>
        </div>
        <div className="ml-[6px] flex mt-[10px] shrink-0">
          {sheets.map(([n, w, p]) => (
            <div key={n} className={"h-[28px] leading-[28px] text-[19.5px] text-[#333] border-l border-[#ccd0d4] whitespace-nowrap " + w + " " + p}>{n}</div>
          ))}
          <div className="w-px h-[28px] bg-[#ccd0d4]" />
        </div>
        <svg width="16" height="16" viewBox="0 0 16 16" className="ml-[62px] mt-[17px] shrink-0"><path d="M8 0v16M0 8h16" stroke="#444" strokeWidth="1.4" /></svg>
        <div className="ml-[250px] mt-[18px] flex flex-col gap-[3px] shrink-0">
          <div className="w-[3px] h-[3px] bg-[#444]" /><div className="w-[3px] h-[3px] bg-[#444]" /><div className="w-[3px] h-[3px] bg-[#444]" />
        </div>
        <div className="ml-[23px] mt-[10px] w-[902px] h-[26px] rounded-[10px] bg-[#f4f4f4] flex items-center pl-[8px] pr-[8px] shrink-0">
          <svg width="9" height="12" viewBox="0 0 9 12" className="shrink-0"><path d="M0 6l9-6v12z" fill="#707070" /></svg>
          <div className="ml-[9px] w-[114px] h-[12px] rounded-full bg-[#707070]" />
          <svg width="9" height="12" viewBox="0 0 9 12" className="ml-auto shrink-0"><path d="M9 6L0 0v12z" fill="#707070" /></svg>
        </div>
      </div>

      {/* status bar */}
      <div className="h-[33px] shrink-0 bg-[#f3f3f3] border-b border-[#b8b8b8] flex items-center pl-[17px] text-[15px]">
        <span className="w-[71px]">Ready</span>
        <svg width="23" height="26" viewBox="0 0 23 26" className="shrink-0">
          <circle cx="9" cy="4" r="3" fill="none" stroke="#444" strokeWidth="1.2" />
          <path d="M1 7l8 3 8-3M9 10v6l-5 9M9 16l3 4" fill="none" stroke="#444" strokeWidth="1.2" />
          <path d="M13 17l8 8M21 17l-8 8" stroke="#444" strokeWidth="1.2" />
        </svg>
        <span className="ml-[4px] font-bold whitespace-nowrap">Accessibility: Investigate</span>
        <div className="ml-auto h-[32px] w-[60px] bg-[#e1e1e1] flex items-center justify-center shrink-0">
          <svg width="20" height="22" viewBox="0 0 20 22"><rect x="0.75" y="0.75" width="18.5" height="20.5" fill="#fafafa" stroke="#333" strokeWidth="1.5" /><path d="M7 1v20M13 1v20M1 7.5h18M1 14.5h18" stroke="#333" strokeWidth="1.3" /></svg>
        </div>
        <svg width="20" height="22" viewBox="0 0 20 22" className="ml-[19px] shrink-0"><rect x="0.75" y="0.75" width="18.5" height="20.5" fill="#fafafa" stroke="#333" strokeWidth="1.5" /><rect x="5" y="4" width="10" height="14" fill="none" stroke="#333" strokeWidth="1.2" /><path d="M5 9h10M5 13h10" stroke="#333" strokeWidth="1.2" /></svg>
        <svg width="20" height="22" viewBox="0 0 20 22" className="ml-[40px] shrink-0"><rect x="0.75" y="0.75" width="18.5" height="20.5" fill="#fafafa" stroke="#333" strokeWidth="1.5" /><path d="M1 15h18M7 1v14M13 1v14" stroke="#333" strokeWidth="1.3" /></svg>
        <div className="ml-[29px] w-[10px] h-[1.5px] bg-[#444] shrink-0" />
        <div className="ml-[9px] w-[148px] h-[3px] bg-[#666] flex justify-center items-center shrink-0">
          <div className="w-[8px] h-[17px] bg-[#5a5a5a] shrink-0" />
        </div>
        <svg width="12" height="20" viewBox="0 0 12 20" className="ml-[8px] shrink-0"><path d="M6 3v14M0 10h12" stroke="#444" strokeWidth="1.2" /></svg>
        <span className="ml-[19px] mr-[10px] text-[15px] w-[40px] text-[#444]">100%</span>
      </div>

      {/* taskbar */}
      <div className="h-[24px] shrink-0 overflow-hidden bg-linear-to-r from-[#d8eef3] via-[#dcedf3] to-[#cfe5ea] flex items-start pl-[46px]">
        <div className="mt-[8px] w-[22px] h-[30px] rounded-full bg-[#c42b1c] text-white text-[13px] text-center leading-[20px] shrink-0">1</div>
        <span className="ml-[9px] mt-[12px] w-[35px] text-[17px] whitespace-nowrap shrink-0">66°F</span>
        <div className="ml-[506px] mt-[19px] w-[34px] grid grid-cols-2 gap-[2px] shrink-0">
          <div className="h-[16px] bg-[#4ec4f2]" /><div className="h-[16px] bg-[#2aa6e6]" />
        </div>
        <div className="ml-[25px] mt-[12px] w-[322px] h-[30px] rounded-t-[16px] bg-[#f3f8fa] border border-[#c8dde3] flex justify-end pr-[3px] pt-[1px] shrink-0">
          <div className="w-[66px] h-[26px] rounded-t-[18px] bg-[#b8763e] border-[3px] border-[#8a5a30] flex justify-end">
            <div className="w-[30px] h-[20px] rounded-tl-[12px] bg-[#55a8a8]" />
          </div>
        </div>
        <div className="ml-[30px] mt-[19px] w-[27px] h-[16px] bg-white shrink-0" />
        <svg width="26" height="16" viewBox="0 0 26 16" className="ml-[34px] mt-[16px] shrink-0"><path d="M13 0h8l5 16H0z" fill="#0078d4" /></svg>
        <div className="ml-[38px] mt-[18px] w-[36px] h-[16px] bg-[#e8a70f] rounded-t-[2px] shrink-0" />
        <div className="ml-[29px] mt-[19px] w-[36px] h-[16px] bg-[#0f6cbd] border-2 border-[#3aa0e8] rounded-t-[3px] shrink-0" />
        <div className="ml-[33px] mt-[16px] w-[30px] h-[20px] rounded-t-full bg-linear-to-r from-[#30c5d8] to-[#2bb0a0] shrink-0" />
        <svg width="25" height="16" viewBox="0 0 25 16" className="ml-[36px] mt-[16px] shrink-0"><path d="M12 0h8l5 16H0z" fill="#1068d0" /></svg>
        <div className="ml-[42px] mt-[6px] w-[39px] h-[30px] flex items-end shrink-0">
          <div className="w-[24px] h-[20px] rounded-tl-full bg-[#e53935] mt-auto" />
          <div className="-ml-[6px] w-[21px] h-[30px] rounded-t-[10px] bg-[#6a86a8] border border-[#3a4a5a]" />
        </div>
        <div className="ml-[25px] mt-[10px] w-[43px] h-[26px] flex items-end shrink-0">
          <div className="w-[24px] h-[12px] bg-[#1490df]" />
          <div className="-ml-[6px] mb-[2px] w-[24px] h-[26px] rounded-t-full bg-[#0f6cdb] text-white text-[13px] text-center leading-[20px]">12</div>
        </div>
        <div className="ml-[27px] mt-[20px] w-[29px] h-[16px] bg-[#4f2ee8] rounded-t-[2px] shrink-0" />
        <div className="ml-[36px] mt-[19px] w-[25px] h-[16px] bg-[#7a7f85] rounded-t-[5px] shrink-0" />
        <div className="ml-[25px] mt-[6px] w-[57px] h-[30px] bg-[#eef5f6] rounded-t-[6px] border border-[#dcebef] flex justify-center pt-[13px] shrink-0">
          <div className="w-[27px] h-[16px] bg-[#5cc24c] rounded-t-[2px]" />
        </div>
        <span className="ml-auto mr-[28px] mt-[13px] text-[17px] whitespace-nowrap">8:44 PM</span>
      </div>
    </div>
  );
}
